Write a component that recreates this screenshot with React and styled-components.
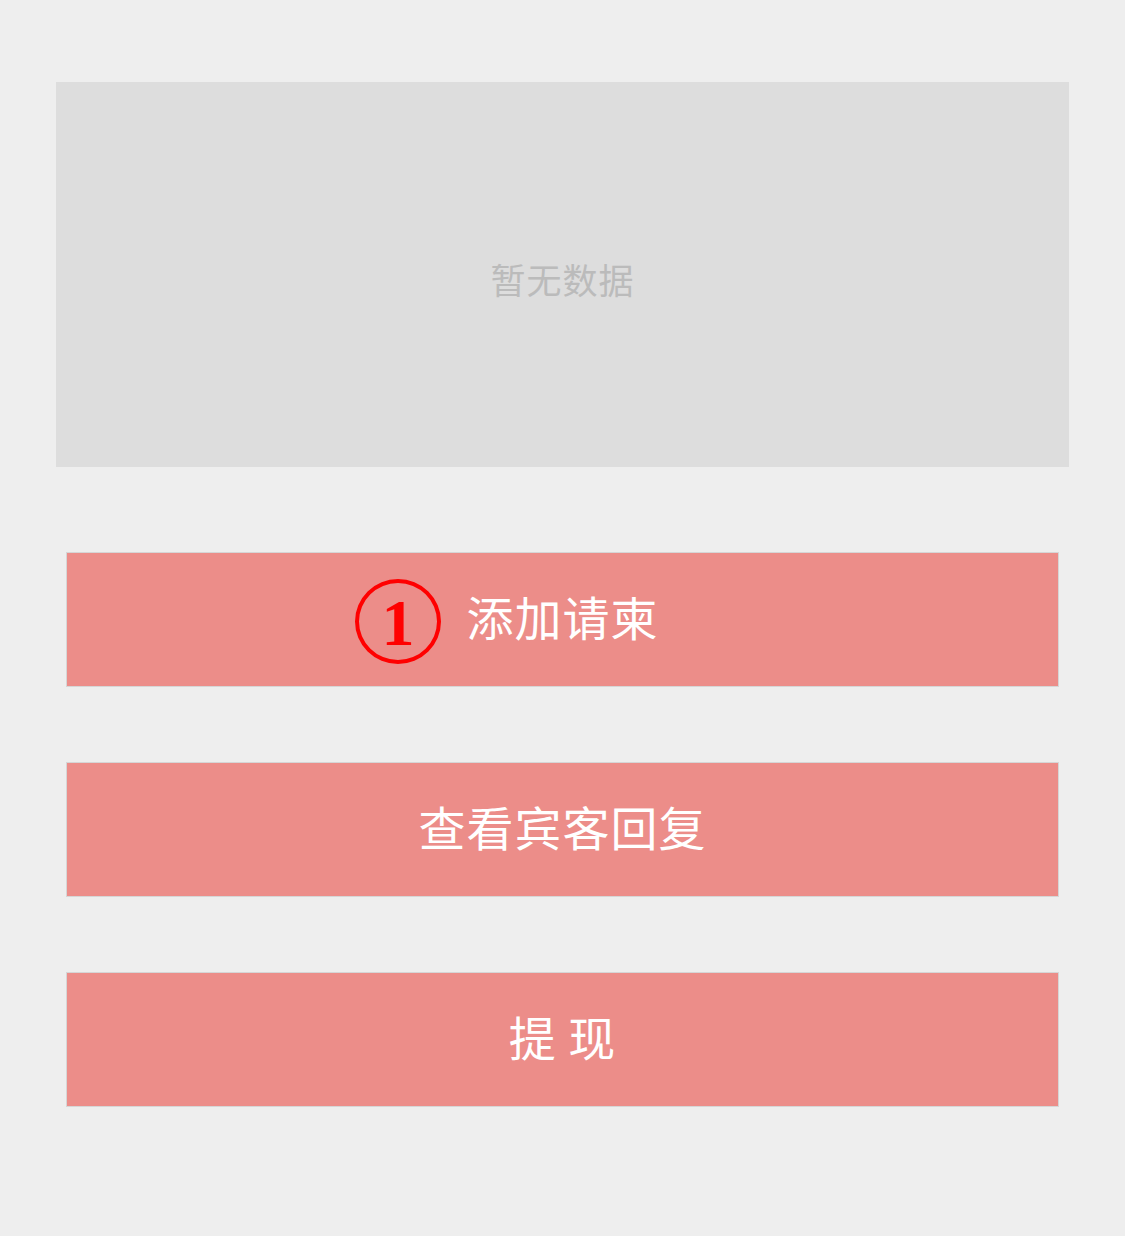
import React from "react";
import styled, { createGlobalStyle } from "styled-components";

const GlobalStyle = createGlobalStyle`
  html, body {
    margin: 0;
    padding: 0;
    background: #eeeeee;
  }
  body {
    font-family: "Noto Sans CJK SC", "Noto Sans", sans-serif;
  }
`;

const Page = styled.div`
  width: 1125px;
  min-height: 1236px;
  box-sizing: border-box;
  padding-top: 82px;
  background: #eeeeee;
`;

const EmptyPanel = styled.div`
  margin: 0 56px;
  height: 385px;
  box-sizing: border-box;
  padding-top: 8px;
  background: #dddddd;
  display: flex;
  align-items: center;
  justify-content: center;
  color: #bbbbbb;
  font-size: 35px;
  letter-spacing: 1px;
`;

const ButtonList = styled.div`
  display: flex;
  flex-direction: column;
  gap: 75px;
  margin: 85px 66px 0;
`;

const ActionButton = styled.div`
  position: relative;
  height: 135px;
  box-sizing: border-box;
  padding-bottom: 8px;
  border: 1px solid #d6d6d6;
  background: #ec8d89;
  color: #ffffff;
  font-size: 47px;
  display: flex;
  align-items: center;
  justify-content: center;
  letter-spacing: 1px;
  white-space: pre;
`;

// red circled "1" laid over the first button
const Marker = styled.span`
  position: absolute;
  left: 288px;
  top: 26px;
  width: 86px;
  height: 85px;
  box-sizing: border-box;
  border: 4px solid #ff0000;
  border-radius: 50%;
  color: #ff0000;
  font-family: "Liberation Serif", "DejaVu Serif", serif;
  font-weight: bold;
  font-size: 66px;
  line-height: 1;
  display: flex;
  align-items: center;
  justify-content: center;
  letter-spacing: 0;
  padding-top: 2px;
`;

const App = () => {
  return (
    <>
      <GlobalStyle />
      <Page>
        <EmptyPanel>暂无数据</EmptyPanel>
        <ButtonList>
          <ActionButton>
            <Marker>1</Marker>
            添加请柬
          </ActionButton>
          <ActionButton>查看宾客回复</ActionButton>
          <ActionButton>提 现</ActionButton>
        </ButtonList>
      </Page>
    </>
  );
};

export default App;
